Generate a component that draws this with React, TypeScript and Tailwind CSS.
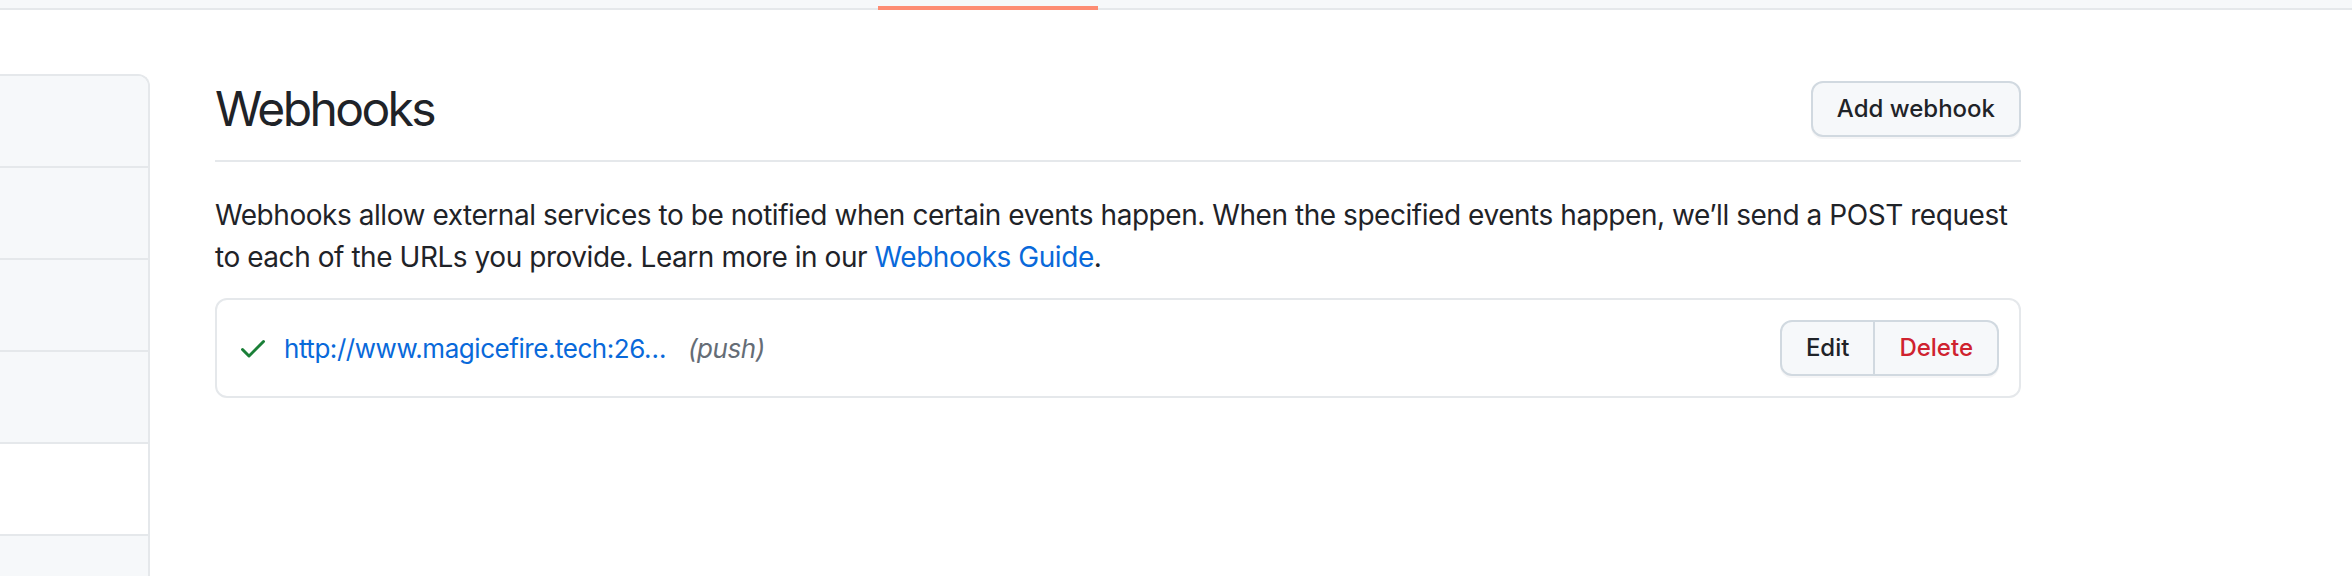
import { useState } from "react";

const font = { fontFamily: "Inter, 'Liberation Sans', sans-serif" };

function CheckIcon() {
  return (
    <svg width="32" height="32" viewBox="0 0 16 16" fill="#1a7f37" aria-hidden="true">
      <path d="M13.78 4.22a.75.75 0 0 1 0 1.06l-7.25 7.25a.75.75 0 0 1-1.06 0L2.22 9.28a.751.751 0 0 1 .018-1.042.751.751 0 0 1 1.042-.018L6 10.94l6.72-6.72a.75.75 0 0 1 1.06 0Z" />
    </svg>
  );
}

// rows of the settings menu; only the right edge is visible in the shot
const sideRows = ["gray", "gray", "gray", "gray", "white", "gray"];

export default function App() {
  const [hooks] = useState([
    { url: "http://www.magicefire.tech:26…", events: "(push)" },
  ]);

  return (
    <div className="w-[2352px] h-[576px] overflow-hidden bg-white text-[#1f2328]" style={font}>
      {/* header strip with the selected tab underline */}
      <div className="relative h-[10px] bg-[#f6f8fa] border-b-2 border-[#e5e8eb]">
        <div className="absolute left-[878px] top-[6px] w-[220px] h-[4px] bg-[#fd8c73]" />
      </div>

      <div className="flex items-start mt-[64px]">
        {/* sidebar */}
        <div className="w-[150px] shrink-0 border-t-2 border-r-2 border-[#e5e8eb] rounded-tr-[12px] overflow-hidden">
          {sideRows.map((c, i) => (
            <div
              key={i}
              className={
                "h-[92px] border-b-2 border-[#e5e8eb] " +
                (c === "white" ? "bg-white" : "bg-[#f6f8fa]")
              }
            />
          ))}
        </div>

        {/* main */}
        <div className="ml-[65px] w-[1806px]">
          <div className="flex items-center justify-between h-[88px] pb-[16px] border-b-2 border-[#e5e8eb] mb-[32px]">
            <h2 className="text-[48px] leading-[72px] font-normal tracking-[-2.6px]">Webhooks</h2>
            <button className="h-[56px] px-[24px] rounded-[12px] border-2 border-[#d1d9e0] bg-[#f6f8fa] text-[24px] font-medium shadow-[0_2px_0_rgba(31,35,40,0.04)]">
              Add webhook
            </button>
          </div>

          <p className="text-[28px] leading-[42px] mb-[20px] tracking-[-0.45px]">
            Webhooks allow external services to be notified when certain events happen. When the specified events
            happen, we’ll send a POST request to each of the URLs you provide. Learn more in our{" "}
            <a className="text-[#0969da]">Webhooks Guide</a>.
          </p>

          <div className="border-2 border-[#e5e8eb] rounded-[12px]">
            {hooks.map((h, i) => (
              <div key={i} className="flex items-center p-[20px]">
                <CheckIcon />
                <a className="ml-[15px] text-[26px] tracking-[-0.45px] text-[#0969da]">{h.url}</a>
                <span className="ml-[22px] text-[26px] tracking-[-0.45px] italic text-[#656d76]">{h.events}</span>
                <div className="ml-auto flex">
                  <button className="h-[56px] px-[24px] rounded-l-[12px] border-2 border-[#d1d9e0] bg-[#f6f8fa] text-[24px] font-medium shadow-[0_2px_0_rgba(31,35,40,0.04)]">
                    Edit
                  </button>
                  <button className="h-[56px] px-[24px] rounded-r-[12px] border-2 border-l-0 border-[#d1d9e0] bg-[#f6f8fa] text-[24px] font-medium text-[#cf222e] shadow-[0_2px_0_rgba(31,35,40,0.04)]">
                    Delete
                  </button>
                </div>
              </div>
            ))}
          </div>
        </div>
      </div>
    </div>
  );
}
